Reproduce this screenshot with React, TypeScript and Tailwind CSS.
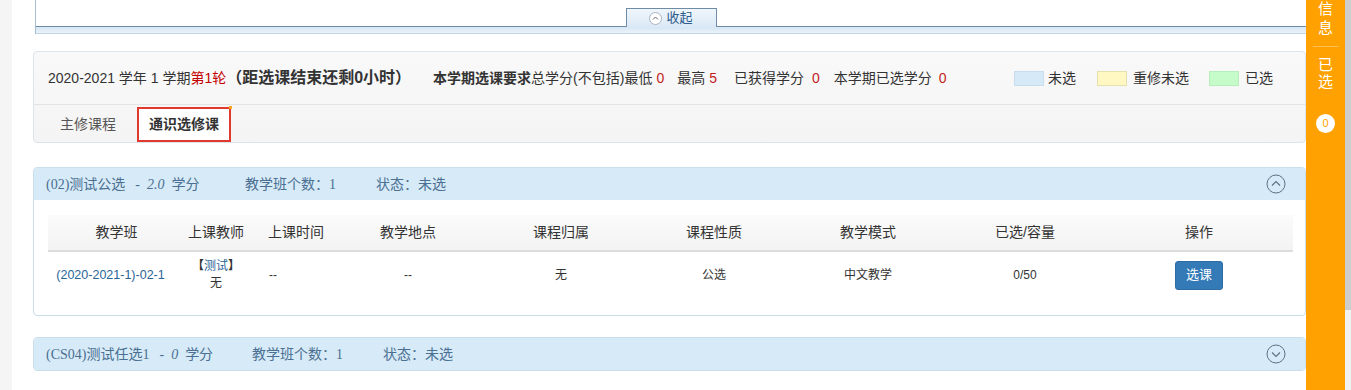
const sans = "font-['Liberation_Sans','Noto_Sans_CJK_SC',sans-serif]";

function CircleChevron({ up }: { up: boolean }) {
  return (
    <svg width="20" height="20" viewBox="0 0 20 20" fill="none">
      <circle cx="10" cy="10" r="9" stroke="#5d7183" strokeWidth="1" />
      {up ? (
        <polyline points="6,11.5 10,7.5 14,11.5" stroke="#5d7183" strokeWidth="1.1" fill="none" />
      ) : (
        <polyline points="6,8.5 10,12.5 14,8.5" stroke="#5d7183" strokeWidth="1.1" fill="none" />
      )}
    </svg>
  );
}

function PanelHeader({
  title,
  credit,
  w1,
  up,
}: {
  title: string;
  credit: string;
  w1: string;
  up: boolean;
}) {
  return (
    <div className="flex h-[32px] items-center bg-[#d6eaf7] pl-[12px] pr-[19px] text-[14px] text-[#4a6f92]">
      <div className={`${w1} flex whitespace-nowrap font-['Liberation_Serif','Noto_Sans_CJK_SC',serif]`}>
        <span>{title}</span>
        <span className="ml-[10px]">-</span>
        <i className="ml-[7px]">{credit}</i>
        <span className="ml-[7px]">学分</span>
      </div>
      <div className="w-[131px] whitespace-nowrap font-['Liberation_Serif','Noto_Sans_CJK_SC',serif]">
        教学班个数：1
      </div>
      <div className="whitespace-nowrap">状态：未选</div>
      <div className="ml-auto">
        <CircleChevron up={up} />
      </div>
    </div>
  );
}

const cols = 'grid grid-cols-[137px_62px_98px_126px_180px_126px_182px_132px_202px]';

export default function App() {
  return (
    <div className={`flex h-[390px] w-[1351px] overflow-hidden bg-white text-[#333] ${sans}`}>
      <div className="w-[12px] shrink-0 bg-[#f5f5f5]" />

      <div className="w-[1294px] shrink-0 pl-[21px]">
        {/* top collapsed panel */}
        <div className="ml-[2px] border-l border-[#a9bfd0]">
          <div className="flex h-[27px] items-end justify-center border-b border-[#6f8ca6]">
            <div className="-mb-px flex h-[19px] w-[91px] items-center justify-center gap-[4px] border border-b-0 border-[#6f8ca6] bg-gradient-to-b from-[#f0f6fc] to-[#dbe9f6] text-[13px] text-[#2d5c8a]">
              <svg width="13" height="13" viewBox="0 0 13 13" fill="none">
                <circle cx="6.5" cy="6.5" r="6" stroke="#a8b4bf" fill="#fff" />
                <polyline points="4,7.5 6.5,5 9,7.5" stroke="#667" strokeWidth="1" fill="none" />
              </svg>
              <span>收起</span>
            </div>
          </div>
          <div className="h-[7px] border-b border-[#c2d6e6] bg-gradient-to-b from-[#d5e6f4] to-[#eaf2f9]" />
        </div>

        {/* info card */}
        <div className="mt-[17px] rounded-[4px] border border-[#dde5ea] bg-gradient-to-b from-[#f9f9f9] to-[#f4f4f4]">
          <div className="flex h-[53px] items-center whitespace-nowrap border-b border-[#e4e4e4] pl-[14px] pr-[32px] text-[14px]">
            <span>2020-2021 学年 1 学期</span>
            <span className="text-[#c40000]">第1轮</span>
            <span className="text-[16px] font-bold">（距选课结束还剩0小时）</span>
            <span className="ml-[22px] font-bold">本学期选课要求</span>
            <span>总学分(不包括)最低</span>
            <span className="ml-[4px] text-[#c31d1d]">0</span>
            <span className="ml-[13px]">最高</span>
            <span className="ml-[4px] text-[#c31d1d]">5</span>
            <span className="ml-[17px]">已获得学分</span>
            <span className="ml-[8px] text-[#c31d1d]">0</span>
            <span className="ml-[14px]">本学期已选学分</span>
            <span className="ml-[7px] text-[#c31d1d]">0</span>
            <div className="ml-auto flex items-center">
              <span className="h-[15px] w-[30px] border border-[#c9dded] bg-[#d6e9f6]" />
              <span className="ml-[4px]">未选</span>
              <span className="ml-[21px] h-[15px] w-[30px] border border-[#e6e0ae] bg-[#fff8c2]" />
              <span className="ml-[6px]">重修未选</span>
              <span className="ml-[20px] h-[15px] w-[30px] border border-[#b8eebb] bg-[#c6fcc9]" />
              <span className="ml-[6px]">已选</span>
            </div>
          </div>
          <div className="flex h-[37px] items-end text-[14px]">
            <div className="ml-[13px] flex h-[35px] items-center px-[13px] text-[#555]">主修课程</div>
            <div className="relative ml-[8px] flex h-[35px] items-center border-2 border-[#e2392e] bg-white px-[10px] font-bold text-[#333]">
              通识选修课
              <span className="absolute -right-[3px] -top-[3px] h-[3px] w-[3px] bg-[#f5a623]" />
            </div>
          </div>
        </div>

        {/* course panel 1 */}
        <div className="mt-[24px] overflow-hidden rounded-[4px] border border-[#cadfec]">
          <PanelHeader title="(02)测试公选" credit="2.0" w1="w-[199px]" up />
          <div className="pb-[17px] pl-[14px] pr-[12px] pt-[15px]">
            <div className={`${cols} h-[37px] items-center border-b-2 border-[#dcdcdc] bg-gradient-to-b from-[#fbfbfb] to-[#f3f3f3] text-[14px]`}>
              <div className="text-center">教学班</div>
              <div className="text-center">上课教师</div>
              <div className="pl-[21px]">上课时间</div>
              <div className="text-center">教学地点</div>
              <div className="text-center">课程归属</div>
              <div className="text-center">课程性质</div>
              <div className="text-center">教学模式</div>
              <div className="text-center">已选/容量</div>
              <div className="pl-[14px] text-center">操作</div>
            </div>
            <div className={`${cols} h-[46px] items-center text-[12px]`}>
              <div className="pr-[12px] text-center text-[12.5px] text-[#2a6496]">(2020-2021-1)-02-1</div>
              <div className="flex flex-col items-center leading-[17px]">
                <span>
                  <b>【</b>
                  <span className="text-[#2a6496]">测试</span>
                  <b>】</b>
                </span>
                <span>无</span>
              </div>
              <div className="pl-[22px]">--</div>
              <div className="text-center">--</div>
              <div className="text-center">无</div>
              <div className="text-center">公选</div>
              <div className="text-center">中文教学</div>
              <div className="text-center">0/50</div>
              <div className="flex justify-center pl-[14px]">
                <button className="h-[29px] w-[48px] rounded-[3px] border border-[#2e6da4] bg-[#337ab7] text-[13px] text-white">
                  选课
                </button>
              </div>
            </div>
          </div>
        </div>

        {/* course panel 2 */}
        <div className="mt-[21px] overflow-hidden rounded-[4px] border border-[#cadfec]">
          <PanelHeader title="(CS04)测试任选1" credit="0" w1="w-[206px]" up={false} />
        </div>
      </div>

      {/* right sidebar */}
      <div className="flex w-[39px] shrink-0 flex-col items-center bg-[#ffa100] text-[15px] text-white">
        <div className="-mt-[1px] flex flex-col items-center leading-[19px]">
          <span>信</span>
          <span>息</span>
        </div>
        <div className="mt-[9px] h-px w-[26px] bg-[#ffbe52]" />
        <div className="mt-[9px] flex flex-col items-center leading-[17px]">
          <span>已</span>
          <span>选</span>
        </div>
        <div className="mt-[24px] flex h-[19px] w-[19px] items-center justify-center rounded-full bg-white text-[11px] text-[#ffa100]">
          0
        </div>
      </div>

      {/* scrollbar */}
      <div className="flex w-[6px] shrink-0 flex-col bg-[#f1f1f1]">
        <div className="h-[310px] bg-[#cdcdcd]" />
      </div>
    </div>
  );
}
